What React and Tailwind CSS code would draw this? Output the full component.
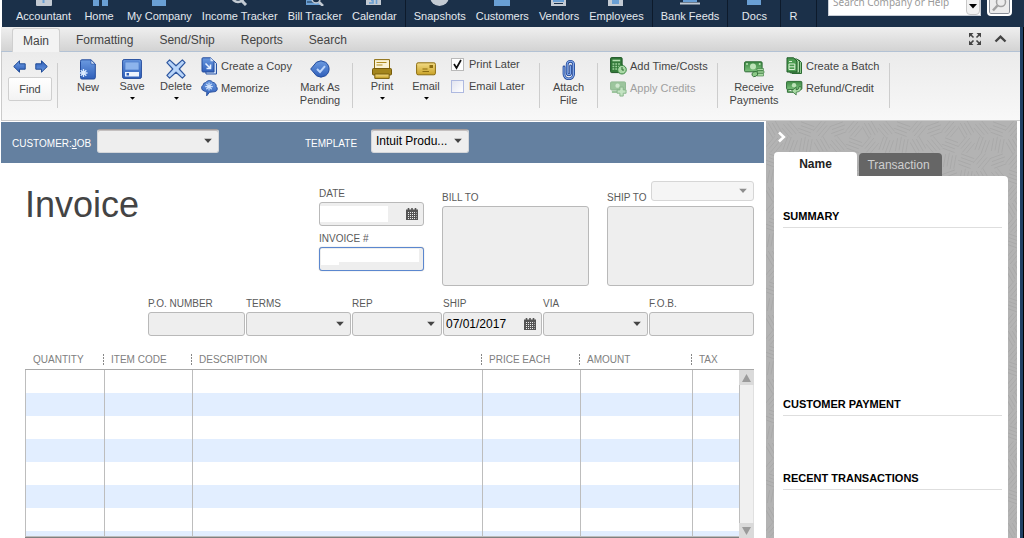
import React from 'react';

/* ---------- toolbar drawings ---------- */

function Gradients() {
  return (
    <svg width="0" height="0" className="absolute" aria-hidden="true">
      <defs>
        <linearGradient id="blue" x1="0" y1="0" x2="0" y2="1">
          <stop offset="0" stopColor="#6b9ae0" />
          <stop offset="1" stopColor="#2f5fba" />
        </linearGradient>
        <linearGradient id="gold" x1="0" y1="0" x2="0" y2="1">
          <stop offset="0" stopColor="#f3dc86" />
          <stop offset="1" stopColor="#c9a227" />
        </linearGradient>
        <linearGradient id="green" x1="0" y1="0" x2="0" y2="1">
          <stop offset="0" stopColor="#3f8a45" />
          <stop offset="1" stopColor="#7cc07c" />
        </linearGradient>
      </defs>
    </svg>
  );
}

const ArrowIcon = ({ flip }) => (
  <svg width="13" height="13" viewBox="0 0 13 13" className={flip ? 'rotate-180' : ''}>
    <path d="M.7 6.5 6.5.8v3h5.700v5.400H6.500v3z" fill="url(#blue)" stroke="#1f4a96" strokeLinejoin="round" />
  </svg>
);

const NewIcon = () => (
  <svg width="18" height="21" viewBox="0 0 18 21">
    <path d="M3 .8h9L16.300 5v13.500a1.500 1.500 0 0 1-1.500 1.500H3a1.500 1.500 0 0 1-1.500-1.500v-16A1.500 1.500 0 0 1 3 .8z" fill="url(#blue)" stroke="#244c9c" />
    <path d="M12 1v4h4z" fill="#d5e4fa" stroke="#244c9c" strokeWidth=".6" />
    <path d="M4.500 10v8M.5 14h8M1.700 11.200l5.600 5.600M7.300 11.200l-5.600 5.600" stroke="#dcebff" strokeWidth="1.300" />
  </svg>
);

const SaveIcon = () => (
  <svg width="20" height="20" viewBox="0 0 20 20">
    <rect x=".6" y=".6" width="18.800" height="18.800" rx="1.500" fill="url(#blue)" stroke="#244c9c" />
    <rect x="3" y="3" width="14" height="8" fill="#8db4ec" stroke="#3f6fc4" strokeWidth=".6" />
    <rect x="3" y="13" width="14" height="4.500" fill="#eef4fd" />
    <rect x="4.500" y="14" width="2.500" height="2.500" fill="#2f5fba" />
  </svg>
);

const DeleteIcon = () => (
  <svg width="20" height="20" viewBox="0 0 20 20">
    <path
      d="M3.600.9 10 6.800 16.400.9 19.100 3.600 13.200 10l5.900 6.400-2.700 2.700L10 13.200 3.600 19.100.9 16.400 6.800 10 .9 3.600z"
      fill="#b9d5f9"
      stroke="#2d569f"
      strokeWidth="1.200"
      strokeLinejoin="round"
    />
  </svg>
);

const CopyIcon = () => (
  <svg width="17" height="18" viewBox="0 0 17 18">
    <path d="M4 3.500h8.500l3 3V17H5z" fill="#cfe0f8" stroke="#2a55a5" />
    <path d="M2 .8h7.500l3.500 3.400V15H2a1 1 0 0 1-1-1V1.800a1 1 0 0 1 1-1z" fill="url(#blue)" stroke="#244c9c" />
    <path d="M9.500.8v3.400H13z" fill="#d5e4fa" />
    <path d="M4.500 6.500 9 11M9.500 7.500v4h-4" fill="none" stroke="#e6f0ff" strokeWidth="1.600" />
  </svg>
);

const MemorizeIcon = () => (
  <svg width="18" height="17" viewBox="0 0 18 17">
    <path d="M5 2.200A4.500 4.500 0 0 1 12.500 2a4 4 0 0 1 3.600 4.500 3 3 0 0 1-1.300 5.300L9 12.500 6 16.300 6.200 12a5 5 0 0 1-3-1A3.300 3.300 0 0 1 2.200 5 3 3 0 0 1 5 2.200z" fill="url(#blue)" stroke="#244c9c" />
    <path d="M8.500 2.500v8M4.500 6.500h8M5.700 3.700l5.600 5.600M11.300 3.700 5.700 9.300" stroke="#cfe2fc" strokeWidth="1.200" />
  </svg>
);

const PendingIcon = () => (
  <svg width="20" height="18" viewBox="0 0 20 18">
    <path d="M.7 9 6.500 2.200Q11-.6 15.600 2.300A8.200 8.200 0 0 1 15.600 15.700Q11 18.600 6.500 15.800z" fill="url(#blue)" stroke="#244c9c" />
    <path d="m7 9 3 3 5-5.800" fill="none" stroke="#bcd5fb" strokeWidth="2" />
  </svg>
);

const PrintIcon = () => (
  <svg width="20" height="20" viewBox="0 0 20 20">
    <path d="M2.500.6h15v10h-15z" fill="#faf3d6" stroke="#8c6d10" />
    <path d="M4.500 3.500h10M4.500 6h6" stroke="#b08d22" strokeWidth="1.200" />
    <rect x=".5" y="9.500" width="19" height="6.500" rx="1" fill="#a3851d" stroke="#775c0b" />
    <path d="M2.800 15h14.400v4.400H2.800z" fill="url(#gold)" stroke="#775c0b" />
  </svg>
);

const EmailIcon = () => (
  <svg width="20" height="14" viewBox="0 0 20 14">
    <rect x=".6" y=".8" width="18.800" height="12" rx="1.500" fill="url(#gold)" stroke="#8c6d10" />
    <rect x="13.500" y="3" width="3.500" height="3" fill="#8c6d10" />
    <path d="M6.500 7h5M6.500 9.500h6.500" stroke="#8c6d10" strokeWidth="1.200" />
  </svg>
);

const ClipIcon = () => (
  <svg width="14" height="21" viewBox="0 0 14 21" fill="none" strokeLinecap="round">
    <path d="M2 8v7a4.800 4.800 0 0 0 9.600 0V5.500a3.200 3.200 0 0 0-6.400 0V14a1.700 1.700 0 0 0 3.400 0V7" stroke="#23499a" strokeWidth="2.800" />
    <path d="M2 8v7a4.800 4.800 0 0 0 9.600 0V5.500a3.200 3.200 0 0 0-6.400 0V14a1.700 1.700 0 0 0 3.400 0V7" stroke="#86acec" strokeWidth="1.100" />
  </svg>
);

const TimeCostIcon = () => (
  <svg width="17" height="18" viewBox="0 0 17 18">
    <rect x=".6" y=".6" width="11.500" height="15" rx="1" fill="#347a3a" stroke="#1e5626" />
    <path d="M2.500 3.500h7.700" stroke="#b4dfb0" strokeWidth="1.600" />
    <path d="M2.500 7h8M2.500 9.500h8M2.500 12h6" stroke="#9fd29c" strokeWidth="1.300" strokeDasharray="1.800 1" />
    <circle cx="12" cy="12.700" r="4.300" fill="#a9d8a5" stroke="#3b8742" />
    <path d="M12 10v3h2M12 7v1.300" fill="none" stroke="#2c6b33" />
  </svg>
);

const ApplyIcon = () => (
  <svg width="18" height="17" viewBox="0 0 18 17">
    <rect x=".6" y="1.500" width="15.800" height="8.500" rx="1" fill="#9cc59d" stroke="#8db88f" />
    <circle cx="8" cy="5.500" r="2.300" fill="#d0e7cf" />
    <path d="M2 12h7" stroke="#9cc49d" strokeWidth="2.500" />
    <path d="M10.500 7h3.500v3h3v3.500h-3v3h-3.500v-3h-3V10h3z" fill="#c3e3c2" stroke="#86b588" />
  </svg>
);

const ReceiveIcon = () => (
  <svg width="21" height="17" viewBox="0 0 21 17">
    <rect x=".6" y=".8" width="17.500" height="10" rx="1" fill="url(#green)" stroke="#2b6a32" />
    <circle cx="9" cy="5.500" r="3" fill="#bde3b8" />
    <circle cx="3" cy="3" r="1" fill="#bde3b8" />
    <circle cx="15.700" cy="3" r="1" fill="#bde3b8" />
    <path d="M13 7.500h6.500v2H13zM13.500 10H20v2h-6.500zM13 12.500h6.500v2.500H13z" fill="#a8d9a2" stroke="#357b3a" strokeWidth=".6" />
    <ellipse cx="10.800" cy="13" rx="3" ry="2.400" transform="rotate(-25 11 13)" fill="#8cc987" stroke="#2b6a32" strokeWidth=".8" />
  </svg>
);

const BatchIcon = () => (
  <svg width="17" height="18" viewBox="0 0 17 18">
    <path d="M6 3h7l2.500 2.500V16.500H6z" fill="#8fc98c" stroke="#2b6a32" />
    <path d="M4 2h7l2.500 2.500V15.800H4z" fill="#a9d8a5" stroke="#2b6a32" />
    <path d="M1 .8h6.500L11 4v11H1z" fill="#4b9a50" stroke="#1f5a27" />
    <path d="M3 4.500h3M3 7h5.800v5.500H3zM3 9.800h5.800" fill="none" stroke="#d7f0d3" />
  </svg>
);

const RefundIcon = () => (
  <svg width="18" height="17" viewBox="0 0 18 17">
    <rect x=".6" y="1" width="16.200" height="8.500" rx="1" fill="url(#green)" stroke="#2b6a32" />
    <circle cx="8.500" cy="5" r="2.300" fill="#bde3b8" />
    <path d="M1.500 9.500v3h6" fill="#6db06c" stroke="#2b6a32" />
    <path d="M15.800 6.500q1.500 5-5 6v2.800L5.800 11l5-3.800V10q3.500-.4 3-3.500z" fill="#a9dba4" stroke="#2b6a32" strokeWidth=".8" />
  </svg>
);

const Caret = ({ className = '' }) => (
  <svg width="8" height="5" viewBox="0 0 8 5" className={className} aria-hidden="true">
    <path d="M0 0h8L4 4.500z" fill="currentColor" />
  </svg>
);

const CalendarIcon = () => (
  <svg width="12" height="12" viewBox="0 0 12 12" aria-hidden="true">
    <path d="M0 1.500h12V12H0z" fill="#555" />
    <path d="M2.500 0v2.500M6 0v2.500M9.500 0v2.500" stroke="#555" strokeWidth="1.600" />
    <path d="M2 4.500h8.500M2 6.500h8.500M2 8.500h8.500M2 10.500h8.500" stroke="#eee" strokeDasharray="1 1" />
  </svg>
);

/* ---------- top navigation ---------- */

const G = '#c3cad3';
const B = '#6a9fd4';

const navArt = {
  Accountant: <><rect x="2" width="16" height="18" rx="1" fill={G} /><path d="M9.500 9v6M7 11h5" stroke={B} strokeWidth="2" /></>,
  Home: <path d="M2 3h16l1 1v14h-6v-8h-3v8H4V4z" fill={B} />,
  'My Company': <rect x="3" y="1" width="14" height="17" fill={B} />,
  'Income Tracker': <><circle cx="8" cy="8" r="6" fill="none" stroke={G} strokeWidth="2.500" /><path d="m11 12 5 5" stroke={G} strokeWidth="3" /></>,
  'Bill Tracker': <><path d="M1 1h14v16H1z" fill={B} /><path d="M2 14h10" stroke="#1b3049" /><circle cx="11" cy="11" r="4" fill="#1b3049" stroke={G} strokeWidth="1.500" /><path d="m14 14 4 4" stroke={G} strokeWidth="2.500" /></>,
  Calendar: <><rect x="2" width="15" height="17" fill={G} /><path d="M5 9.500h4v5.500H5M7 12.500h2M12.500 9.500V16" fill="none" stroke={B} strokeWidth="1.600" /></>,
  Snapshots: <circle cx="9.500" cy="8.500" r="9.500" fill={G} />,
  Customers: <rect x="2" y="8" width="16" height="10" fill={B} />,
  Vendors: <><path d="M2 5h15v13H2z" fill={G} /><path d="M4 10h11v4H4z" fill={B} /><path d="M5 15.500h9" stroke="#1b3049" /></>,
  Employees: <><path d="M2 3h15v15H2z" fill={G} /><path d="M6 10h7v6H6z" fill={B} /><path d="M7 11h5" stroke="#fff" /></>,
  'Bank Feeds': <><path d="M3 8h14v6H3z" fill={B} /><path d="M0 14.500h20v2H0z" fill={G} /></>,
  Docs: <path d="M3 1h14v16H3z" fill={B} />,
  R: null,
};

const navGroups = [
  ['Accountant', 'Home', 'My Company', 'Income Tracker', 'Bill Tracker', 'Calendar'],
  ['Snapshots', 'Customers', 'Vendors', 'Employees'],
  ['Bank Feeds'],
  ['Docs'],
  ['R'],
];

function TopNav() {
  return (
    <header className="ml-[2px] flex h-[27px] shrink-0 items-end overflow-hidden bg-[#1b3049]">
      <nav className="flex items-end pl-[6px]">
        {navGroups.map((group) => (
          <div key={group[0]} className="flex gap-[10px] border-r border-[#0d1a2b] px-2 pb-1">
            {group.map((name) => (
              <a
                key={name}
                href={'#' + name.toLowerCase().replace(' ', '-')}
                className={
                  'flex flex-col items-center gap-[3px] text-[11px] leading-[14px] whitespace-nowrap text-[#e4e9ef] ' +
                  (name === 'R' ? 'w-[19px] items-start' : 'min-w-[36px]')
                }
              >
                <svg width="20" height="18" viewBox="0 0 20 18" aria-hidden="true">{navArt[name]}</svg>
                {name}
              </a>
            ))}
          </div>
        ))}
      </nav>
      <form className="mr-3 mb-[11px] ml-auto flex items-end gap-[6px]" onSubmit={(e) => e.preventDefault()}>
        <div className="flex h-6 w-[153px] border border-[#c9ced6] bg-white">
          <input
            aria-label="Search Company or Help"
            placeholder="Search Company or Help"
            className="w-[137px] min-w-0 bg-white pb-1 pl-1 font-['Noto_Sans',sans-serif] text-[10px] text-gray-600 outline-none placeholder:text-[#9a9a9a]"
          />
          <button type="button" aria-label="Search scope" className="flex w-[14px] shrink-0 items-center justify-center rounded-sm border border-[#c8c8c8] bg-[#f2f2f2] pt-1 text-black">
            <Caret />
          </button>
        </div>
        <button aria-label="Search" className="flex h-6 w-[25px] items-center justify-center rounded-sm border-2 border-white bg-[#ececec] ring-1 ring-[#8a8f98] ring-inset">
          <svg width="17" height="17" viewBox="0 0 17 17" fill="none" stroke="#a2a2a2" aria-hidden="true">
            <circle cx="10" cy="6" r="4.500" strokeWidth="1.500" />
            <path d="m6.500 9.500-4.500 5" strokeWidth="2.500" />
          </svg>
        </button>
      </form>
    </header>
  );
}

/* ---------- ribbon ---------- */

function TabBar() {
  return (
    <div className="flex h-[25px] items-stretch border-b border-[#b3c2d4] bg-linear-to-b from-[#efefef] to-[#d3d3d3] pl-[11px] text-[12px] text-[#444]">
      <button className="-mb-px mt-px mr-[3px] rounded-t-[3px] border border-b-0 border-[#cfcfcf] bg-[#f3f3f3] px-[10px]">Main</button>
      {['Formatting', 'Send/Ship', 'Reports', 'Search'].map((t) => (
        <button key={t} className="px-[13px] pt-px">{t}</button>
      ))}
      <div className="mr-[13px] ml-auto flex items-center gap-3">
        <button aria-label="Expand window">
          <svg width="14" height="14" viewBox="0 0 14 14" fill="#444" stroke="#444" aria-hidden="true">
            <path stroke="none" d="M1 1h4.500L1 5.500zM13 1H8.500L13 5.500zM1 13h4.500L1 8.500zM13 13H8.500L13 8.500z" />
            <path strokeWidth="1.600" d="m2.500 2.500 3 3M11.500 2.500l-3 3M2.500 11.500l3-3M11.500 11.500l-3-3" />
          </svg>
        </button>
        <button aria-label="Collapse ribbon">
          <svg width="13" height="10" viewBox="0 0 13 10" fill="none" stroke="#444" strokeWidth="2.400" aria-hidden="true">
            <path d="m1.500 7.500 5-4.800 5 4.800" />
          </svg>
        </button>
      </div>
    </div>
  );
}

function Big({ icon, label, menu, className = 'w-11' }) {
  return (
    <button className={'flex flex-col items-center self-start pt-1 leading-[13px] ' + className}>
      <span className={'flex items-center ' + (menu ? 'h-[23px]' : 'h-6')}>{icon}</span>
      {label}
      {menu && <Caret className="mt-[3px] w-[5px] text-black" />}
    </button>
  );
}

function Small({ icon, label, disabled }) {
  return (
    <button disabled={disabled} className={'flex h-[22px] items-center gap-[3px] whitespace-nowrap ' + (disabled ? 'text-[#a0a0a0]' : '')}>
      <span className="flex w-[17px] shrink-0 justify-center">{icon}</span>
      {label}
    </button>
  );
}

const Rule = () => <div className="mt-[10px] h-[45px] w-px shrink-0 bg-[#cdcdcd]" />;

function Check({ label, checked }) {
  return (
    <label className="flex h-[22px] items-center gap-[5px] whitespace-nowrap">
      <span className="relative size-[13px]">
        <input
          type="checkbox"
          defaultChecked={checked}
          className="peer block size-[13px] appearance-none border border-[#aeb9e0] bg-linear-to-br from-[#e2e4f0] to-white checked:border-[#b9b9b9] checked:from-white"
        />
        <svg width="13" height="13" viewBox="0 0 13 13" className="pointer-events-none absolute inset-0 hidden peer-checked:block" aria-hidden="true">
          <path d="m3 6 2.500 4L10 2" fill="none" stroke="#111" strokeWidth="1.700" />
        </svg>
      </span>
      {label}
    </label>
  );
}

function Ribbon() {
  return (
    <div className="flex h-[69px] border-b border-l border-[#cbcbcb] bg-linear-to-b from-[#ebebeb] to-[#f8f8f8] pt-px text-[11px] text-[#444]">
      <div className="flex w-[55px] shrink-0 flex-col gap-[4px] pt-[7px] pl-[6px]">
        <div className="flex gap-[9px] pl-[5px]">
          <button aria-label="Previous"><ArrowIcon /></button>
          <button aria-label="Next"><ArrowIcon flip /></button>
        </div>
        <button className="h-6 w-11 rounded-[2px] border border-[#cfcfcf] bg-linear-to-b from-white to-[#f3f3f3]">Find</button>
      </div>
      <Rule />
      <div className="flex pr-2 pl-2">
        <Big icon={<NewIcon />} label="New" />
        <Big icon={<SaveIcon />} label="Save" menu />
        <Big icon={<DeleteIcon />} label="Delete" menu />
        <div className="ml-[3px] w-[95px] shrink-0 pt-[2px]">
          <Small icon={<CopyIcon />} label="Create a Copy" />
          <Small icon={<MemorizeIcon />} label="Memorize" />
        </div>
        <Big icon={<PendingIcon />} label="Mark As Pending" className="w-12" />
      </div>
      <Rule />
      <div className="flex pr-3 pl-[7px]">
        <Big icon={<PrintIcon />} label="Print" menu />
        <Big icon={<EmailIcon />} label="Email" menu />
        <div className="ml-[3px] w-[76px] shrink-0">
          <Check label="Print Later" checked />
          <Check label="Email Later" />
        </div>
      </div>
      <Rule />
      <Big icon={<ClipIcon />} label="Attach File" className="w-[57px] px-2" />
      <Rule />
      <div className="w-[119px] shrink-0 pt-[2px] pl-3">
        <Small icon={<TimeCostIcon />} label="Add Time/Costs" />
        <Small icon={<ApplyIcon />} label="Apply Credits" disabled />
      </div>
      <Rule />
      <div className="flex pr-2 pl-2">
        <Big icon={<ReceiveIcon />} label="Receive Payments" className="w-[56px]" />
        <div className="ml-1 w-[95px] shrink-0 pt-[2px]">
          <Small icon={<BatchIcon />} label="Create a Batch" />
          <Small icon={<RefundIcon />} label="Refund/Credit" />
        </div>
      </div>
      <Rule />
    </div>
  );
}

/* ---------- form controls ---------- */

function Select({ id, label, options = [''], className = '', tone = 'text-[#444]', box = 'border-[#b9b9b9] bg-[#eee]' }) {
  return (
    <span className={'relative block ' + className}>
      <select id={id} aria-label={label} className={'block h-full w-full appearance-none rounded-[3px] border pr-5 pl-1 text-[12px] text-black ' + box}>
        {options.map((o) => <option key={o}>{o}</option>)}
      </select>
      <Caret className={'pointer-events-none absolute top-1/2 right-[7px] -translate-y-1/2 ' + tone} />
    </span>
  );
}

function Label({ htmlFor, children }) {
  return <label htmlFor={htmlFor} className="block h-[14px] text-[10px] leading-[12px] whitespace-nowrap text-[#5a5a5a]">{children}</label>;
}

const band = 'border-[#d3d6da] border-t-[#a39c9c] bg-[#eee] shadow-[inset_0_1px_0_#c4c0c0]';

function FormHeader() {
  return (
    <div className="flex h-[41px] shrink-0 items-start bg-[#6480a0] pt-[7px] pl-[11px] text-white">
      <label htmlFor="customer" className="w-[85px] shrink-0 pt-[7px] text-[10px] leading-[16px]">CUSTOMER:<u>J</u>OB</label>
      <Select id="customer" className="h-6 w-[122px]" box={band} />
      <label htmlFor="template" className="ml-[86px] w-[66px] pt-[7px] text-[10px] leading-[16px]">TEMPLATE</label>
      <Select id="template" className="h-6 w-[98px]" box={band} options={['Intuit Produ...']} />
    </div>
  );
}

const field = 'rounded-[3px] border border-[#b9b9b9] bg-[#eee]';

function InvoiceTop() {
  return (
    <div className="flex gap-[18px]">
      <h1 className="mt-[22px] mr-auto text-[36px] leading-[40px] text-[#444]">Invoice</h1>
      <div className="w-[105px] shrink-0 pt-[25px]">
        <Label htmlFor="date">DATE</Label>
        <div className={'mb-[7px] flex h-6 items-center justify-between pr-[5px] ' + field}>
          <input id="date" className="h-4 w-[68px] bg-white px-1 text-[12px]" />
          <button aria-label="Pick date"><CalendarIcon /></button>
        </div>
        <Label htmlFor="number">INVOICE #</Label>
        <div className="h-6 rounded-[3px] border border-[#5b87cf] bg-[#eee] pt-px pl-px shadow-[0_0_1px_#999]">
          <input id="number" className="block h-[13px] w-[98px] bg-white px-1 text-[12px]" />
          <div className="h-[3px] w-[18px] bg-white" />
        </div>
      </div>
      <div className="w-[147px] shrink-0 pt-[29px]">
        <Label htmlFor="bill">BILL TO</Label>
        <textarea id="bill" className={'block h-20 w-full resize-none ' + field} />
      </div>
      <div className="w-[147px] shrink-0 pt-[18px]">
        <div className="flex h-[25px] items-start justify-between">
          <div className="self-end"><Label htmlFor="ship">SHIP TO</Label></div>
          <Select label="Ship to address" className="h-5 w-[103px]" tone="text-[#8d8d8d]" box="border-[#d6d6d6] bg-[#f5f5f5]" />
        </div>
        <textarea id="ship" className={'block h-20 w-full resize-none ' + field} />
      </div>
    </div>
  );
}

function InvoiceDetails() {
  return (
    <div className="mt-3 flex justify-end gap-px">
      <div className="w-[97px]">
        <Label htmlFor="po">P.O. NUMBER</Label>
        <input id="po" className={'block h-6 w-full px-1 text-[12px] ' + field} />
      </div>
      <div className="w-[105px]">
        <Label htmlFor="terms">TERMS</Label>
        <Select id="terms" className="h-6" />
      </div>
      <div className="w-[90px]">
        <Label htmlFor="rep">REP</Label>
        <Select id="rep" className="h-6" />
      </div>
      <div className="w-[99px]">
        <Label htmlFor="shipdate">SHIP</Label>
        <div className={'flex h-6 items-center justify-between pr-[5px] ' + field}>
          <input id="shipdate" defaultValue="07/01/2017" className="w-[70px] bg-transparent pl-[2px] text-[12px] text-black" />
          <button aria-label="Pick ship date"><CalendarIcon /></button>
        </div>
      </div>
      <div className="w-[105px]">
        <Label htmlFor="via">VIA</Label>
        <Select id="via" className="h-6" />
      </div>
      <div className="w-[105px]">
        <Label htmlFor="fob">F.O.B.</Label>
        <input id="fob" className={'block h-6 w-full px-1 text-[12px] ' + field} />
      </div>
    </div>
  );
}

const columns = [
  ['QUANTITY', 'w-20'],
  ['ITEM CODE', 'w-[88px]'],
  ['DESCRIPTION', ''],
  ['PRICE EACH', 'w-[98px]'],
  ['AMOUNT', 'w-28'],
  ['TAX', 'w-[46px]'],
];

function LineItems() {
  return (
    <div className="mt-[14px] flex min-h-0 flex-1 border-b border-[#808080]">
      <div className="min-w-0 flex-1 overflow-hidden border-b border-[#bdbdbd]">
        <table className="w-full table-fixed border-separate border-spacing-0">
          <thead>
            <tr>
              {columns.map(([name, w], i) => (
                <th key={name} className={'h-5 border-b border-[#a9a9a9] p-0 text-left text-[10px] font-normal whitespace-nowrap text-[#808080] ' + w}>
                  <div className={'flex items-center justify-between pr-px ' + (i === 0 ? 'pl-2' : 'pl-[6px]')}>
                    {name}
                    {i < 5 && <span className="h-[11px] w-px bg-[repeating-linear-gradient(#888_0_2px,transparent_2px_3px)]" />}
                  </div>
                </th>
              ))}
            </tr>
          </thead>
          <tbody>
            {Array.from({ length: 10 }, (_, r) => (
              <tr key={r} className="odd:bg-white even:bg-[#e2eeff]">
                {columns.map(([name], i) => (
                  <td key={name} className={'h-[23px] border-[#bdbdbd] p-0 ' + (i < 5 ? 'border-r ' : '') + (i === 0 ? 'border-l' : '')} />
                ))}
              </tr>
            ))}
          </tbody>
        </table>
      </div>
      <div className="-mb-px mt-[19px] flex w-[15px] shrink-0 flex-col border-t border-[#a9a9a9] bg-[#f0f0f0]">
        <button aria-label="Scroll up" className="flex h-[15px] items-center justify-center bg-[#dadada] text-[#9b9b9b]">
          <svg width="9" height="8" viewBox="0 0 9 8" aria-hidden="true"><path d="M4.500 0 9 8H0z" fill="currentColor" /></svg>
        </button>
        <div className="flex-1 border-r border-l border-r-[#e0e0e0] border-l-[#bdbdbd]" />
        <button aria-label="Scroll down" className="flex h-[15px] items-center justify-center bg-[#dadada] text-[#9b9b9b]">
          <svg width="9" height="8" viewBox="0 0 9 8" aria-hidden="true"><path d="M4.500 8 9 0H0z" fill="currentColor" /></svg>
        </button>
      </div>
    </div>
  );
}

/* ---------- side panel ---------- */

function Hatching() {
  const angles = [60, -50, 20, 100, -20, 50, -70, 130];
  return (
    <svg width="100%" height="100%" className="absolute inset-0" aria-hidden="true">
      <defs>
        <pattern id="hatch" width="96" height="64" patternUnits="userSpaceOnUse">
          {Array.from({ length: 24 }, (_, i) => {
            const x = (i % 6) * 16 + 8;
            const y = Math.floor(i / 6) * 16 + 8;
            return (
              <path
                key={i}
                d="M-7-5H7M-6-1.500H8M-8 2H6M-6 5.500H7"
                transform={`translate(${x} ${y}) rotate(${angles[(i * 5 + Math.floor(i / 6) * 3) % 8]})`}
                stroke="#a9a9a9"
                strokeWidth=".9"
              />
            );
          })}
        </pattern>
      </defs>
      <rect width="100%" height="100%" fill="url(#hatch)" />
    </svg>
  );
}

function SidePanel() {
  return (
    <aside className="relative mr-[3px] flex w-[251px] shrink-0 flex-col bg-[#b3b3b3]">
      <Hatching />
      <div className="relative flex flex-1 flex-col pr-[9px] pl-2">
        <button aria-label="Hide panel" className="mt-[9px] ml-1 flex h-[13px] w-2 items-center">
          <svg width="8" height="12" viewBox="0 0 8 12" fill="none" stroke="#fff" strokeWidth="2.600" aria-hidden="true">
            <path d="m1 1.500 4.800 4.500L1 10.500" />
          </svg>
        </button>
        <div className="mt-[9px] flex items-end gap-[2px] text-[12px]">
          <button className="h-6 w-[83px] rounded-t-[4px] bg-white font-bold text-[#222]">Name</button>
          <button className="h-[23px] w-[83px] rounded-t-[4px] bg-[#666] pr-1 text-[#cfcfcf]">Transaction</button>
        </div>
        <div className="flex-1 rounded-tr-[4px] bg-white pt-[32px] pr-[6px] pl-[9px]">
          {[['SUMMARY', 'mb-[168px]'], ['CUSTOMER PAYMENT', 'mb-[54px]'], ['RECENT TRANSACTIONS', '']].map(([t, m]) => (
            <h2 key={t} className={'h-5 border-b border-[#dedede] text-[11px] leading-[16px] font-bold text-black ' + m}>{t}</h2>
          ))}
        </div>
      </div>
    </aside>
  );
}

export default function App() {
  return (
    <div className="flex h-screen flex-col overflow-hidden bg-white font-['Liberation_Sans',Arial,sans-serif]">
      <Gradients />
      <TopNav />
      <div className="flex min-h-0 flex-1 border-r border-black">
        <div className="ml-px flex min-w-0 flex-1 flex-col border-r-[3px] border-[#1f4064]">
          <TabBar />
          <Ribbon />
          <div className="flex min-h-0 flex-1">
            <main className="mr-[2px] flex min-w-0 flex-1 flex-col pt-px">
              <FormHeader />
              <div className="flex min-h-0 flex-1 flex-col pr-[10px] pl-6">
                <InvoiceTop />
                <InvoiceDetails />
                <LineItems />
              </div>
            </main>
            <SidePanel />
          </div>
        </div>
      </div>
    </div>
  );
}
